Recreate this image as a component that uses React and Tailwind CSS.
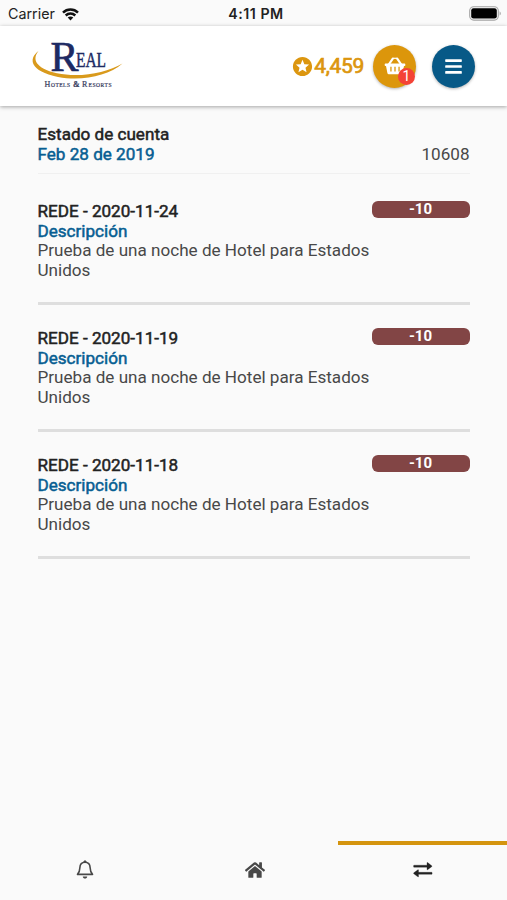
import React from "react"
import { FaBars, FaHome } from "react-icons/fa"
import { MdStars } from "react-icons/md"

const movements = [
    { id: 1, title: "REDE - 2020-11-24", description: "Prueba de una noche de Hotel para Estados Unidos", points: "-10" },
    { id: 2, title: "REDE - 2020-11-19", description: "Prueba de una noche de Hotel para Estados Unidos", points: "-10" },
    { id: 3, title: "REDE - 2020-11-18", description: "Prueba de una noche de Hotel para Estados Unidos", points: "-10" },
]

function WifiIcon() {
    return (
        <svg width="17" height="13" viewBox="0 0 17 13" fill="none" stroke="#111" strokeWidth="2.5" >
            <path d="M1 4.6C5.2.5 11.8.5 16 4.6" />
            <path d="M3.7 7.5C6.4 4.9 10.6 4.9 13.3 7.5" />
            <path d="M8.500 12.500L5.700 9.600C7.300 8.200 9.700 8.200 11.300 9.600Z" fill="#111" stroke="none" />
        </svg>
    )
}

function BatteryIcon() {
    return (
        <svg width="33" height="15" viewBox="0 0 33 15" >
            <rect x=".7" y=".7" width="28.6" height="13.4" rx="4" fill="#fafafa" stroke="#a3a3a3" strokeWidth="1.1" />
            <rect x="2.2" y="2.2" width="25.6" height="10.4" rx="2.3" fill="#000" />
            <path d="M30.6 5.2C32.2 6 32.2 8.8 30.6 9.6Z" fill="#a3a3a3" />
        </svg>
    )
}

function BasketIcon() {
    return (
        <svg width="22" height="18" viewBox="0 0 22 18" fill="none" stroke="#fff" strokeLinejoin="round" >
            <path d="M4.8 7.5L8.8 1.6M17.200 7.500L13.200 1.600" strokeWidth="2.200" strokeLinecap="round" />
            <path d="M8.800 1.300H13.200" strokeWidth="1.200" />
            <path
                fill="#fff" stroke="none" fillRule="evenodd"
                d="M1.500 6.500H20.500Q21.300 6.500 21.300 7.300V8.200Q21.300 9 20.500 9H20L18.600 16Q18.400 17.200 17.200 17.200H4.800Q3.600 17.200 3.400 16L2 9H1.500Q.7 9 .7 8.200V7.300Q.7 6.500 1.500 6.500Z
                M6.300 9.800V14.600H7.600V9.800ZM10.350 9.800V14.600H11.650V9.800ZM14.400 9.800V14.600H15.700V9.800Z"
            />
        </svg>
    )
}

function BellIcon() {
    return (
        <svg width="18" height="20" viewBox="0 0 18 20" fill="none" stroke="#484848" strokeWidth="1.6" strokeLinejoin="round" >
            <path d="M9 2.200C5.700 2.200 4 4.300 3.900 7.500C3.800 10.800 3.400 12.400 1.500 14.400H16.500C14.600 12.400 14.200 10.800 14.100 7.500C14 4.300 12.300 2.200 9 2.200Z" />
            <path d="M7.8 1.9C7.8.3 10.2.3 10.2 1.9Z" fill="#484848" strokeWidth=".8" />
            <path d="M6.800 16.500H11.200C11.200 19.300 6.800 19.300 6.800 16.500Z" fill="#484848" stroke="none" />
        </svg>
    )
}

function SwapIcon() {
    return (
        <svg width="20" height="16" viewBox="0 0 20 16" fill="#222" stroke="#222" strokeWidth=".3" >
            <path d="M1 3.200H14V.8Q14 .2 14.600.6L18.700 3.700Q19.200 4.200 18.700 4.700L14.600 7.700Q14 8.100 14 7.500V5.200H1Q.6 5.200.6 4.700V3.700Q.6 3.200 1 3.200Z" />
            <path d="M18.700 10.300H5.500V8Q5.500 7.400 4.900 7.800L.8 10.800Q.3 11.300.8 11.800L4.900 14.800Q5.500 15.200 5.500 14.600V12.300H18.700Q19.100 12.300 19.100 11.800V10.800Q19.100 10.300 18.700 10.300Z" />
        </svg>
    )
}

function Logo() {
    return (
        <svg width="92" height="50" viewBox="0 0 92 50" className="overflow-visible" fontFamily="'Liberation Serif', serif" >
            <path d="M6.500 10C0 18 3 27 25 32.300C48 37 74 32 90.500 22.500C76 35 50 40.500 26 36C-2 30 -4 18 6.500 10Z" fill="#d99a1c" />
            <g fill="#1d2a63" stroke="#1d2a63" >
                <text x="18.5" y="30" fontSize="43" strokeWidth=".7" textLength="28" lengthAdjust="spacingAndGlyphs" >R</text>
                <text x="44" y="26" fontSize="21" strokeWidth=".5" textLength="30" lengthAdjust="spacingAndGlyphs" >EAL</text>
            </g>
            <g fill="#353a5c" stroke="#353a5c" strokeWidth=".2" >
                <text x="12.5" y="46" fontSize="8" >H</text>
                <text x="19" y="46" fontSize="5.5" textLength="19" >OTELS</text>
                <text x="41" y="46" fontSize="8" fontWeight="bold" >&amp;</text>
                <text x="50" y="46" fontSize="8" >R</text>
                <text x="56.5" y="46" fontSize="5.5" textLength="23" >ESORTS</text>
            </g>
        </svg>
    )
}

function StatusBar() {
    return (
        <div className="h-[26px] px-2 pt-0.5 grid grid-cols-3 items-center font-['Inter',sans-serif] text-[14.3px] text-[#222]" >
            <div className="flex items-center gap-[7px]" >
                <span>Carrier</span>
                <WifiIcon />
            </div>
            <span className="text-center pl-[5px] font-semibold text-[14.2px] tracking-[0.5px] whitespace-nowrap" >4:11 PM</span>
            <div className="flex justify-end -mr-[3px] -mt-0.5" >
                <BatteryIcon />
            </div>
        </div>
    )
}

function Header() {
    return (
        <header className="h-20 bg-white shadow-[0_1px_4px_rgba(0,0,0,0.35)] flex items-center pl-8 pr-8" >
            <Logo />
            <div className="ml-auto flex items-center" >
                <MdStars className="size-[23px] text-[#dc960f]" />
                <span className="text-[21px] leading-none tracking-[-0.3px] [-webkit-text-stroke:0.7px] text-[#dc960f]" >4,459</span>
                <button
                    aria-label="Carrito"
                    className="relative ml-[9px] size-[43px] rounded-full bg-[#dc960b] text-white shadow-[0_1px_3px_rgba(0,0,0,0.3)]
                    flex items-center justify-center"
                >
                    <BasketIcon />
                    <span className="absolute left-[25px] top-[23px] size-[17px] rounded-full bg-[#f44336] text-[14px] leading-[17px] text-center" >
                        1
                    </span>
                </button>
                <button
                    aria-label="Menú"
                    className="ml-4 size-[43px] rounded-full bg-[#075987] text-white shadow-[0_1px_3px_rgba(0,0,0,0.3)]
                    flex items-center justify-center"
                >
                    <FaBars className="size-[19px]" />
                </button>
            </div>
        </header>
    )
}

function MovementRow({ movement }) {
    return (
        <li className="h-[127px] pt-[23px] border-b-[3px] border-[#dedede] flex items-start justify-between" >
            <div className="w-[334px] pt-px" >
                <h2 className="[-webkit-text-stroke:0.5px] text-[#222]" >{movement.title}</h2>
                <h3 className="[-webkit-text-stroke:0.5px] text-[#075e92]" >Descripción</h3>
                <p>{movement.description}</p>
            </div>
            <span className="w-[98px] h-[17px] rounded-md bg-[#824545] text-white font-bold text-[15px] leading-[17px] text-center" >
                {movement.points}
            </span>
        </li>
    )
}

function App() {

    return (
        <div className="h-[900px] flex flex-col bg-[#fafafa] font-['Roboto',sans-serif] text-[#484848]" >
            <StatusBar />
            <Header />
            <main className="flex-1 px-[37.5px] pt-[19px] text-[17.1px] leading-[19.5px]" >
                <div className="h-[49px] border-b border-[#f0f0f0] flex items-start justify-between" >
                    <div>
                        <h1 className="[-webkit-text-stroke:0.5px] text-[#222]" >Estado de cuenta</h1>
                        <p className="[-webkit-text-stroke:0.5px] text-[#075e92]" >Feb 28 de 2019</p>
                    </div>
                    <span className="pt-[19.5px]" >10608</span>
                </div>
                <ul className="pt-1" >
                    {
                        movements.map(m => (
                            <MovementRow key={m.id} movement={m} />
                        ))
                    }
                </ul>
            </main>
            <nav className="h-[59px] grid grid-cols-3" >
                <button aria-label="Notificaciones" className="border-t-4 border-transparent pb-[5px] flex items-center justify-center" >
                    <BellIcon />
                </button>
                <button aria-label="Inicio" className="border-t-4 border-transparent pb-[6px] pl-0.5 flex items-center justify-center" >
                    <FaHome className="size-[20px] text-[#484848]" />
                </button>
                <button aria-label="Movimientos" className="border-t-4 border-[#d4940f] pb-[6px] flex items-center justify-center" >
                    <SwapIcon />
                </button>
            </nav>
        </div>
    )

}

export default App
